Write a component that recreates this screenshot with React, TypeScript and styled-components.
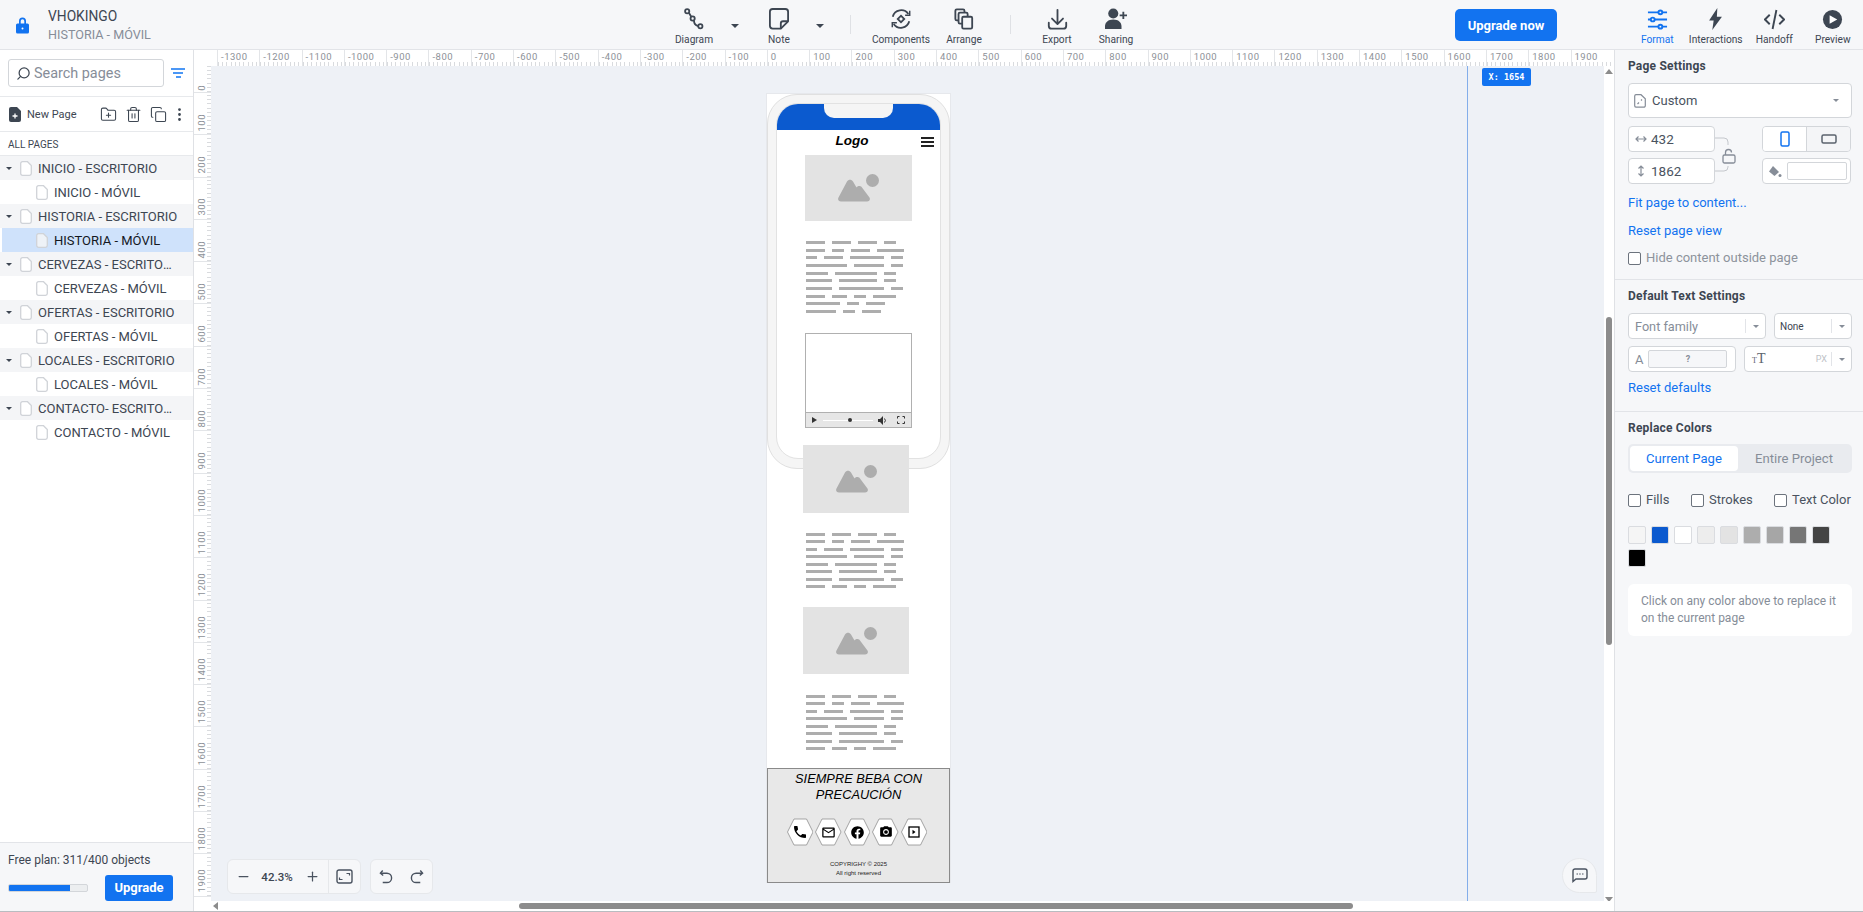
import React from "react";
import styled, { createGlobalStyle } from "styled-components";
import {
  Copy,
  FolderPlus,
  Minus,
  MoreVertical,
  Plus,
  Search,
  Trash2,
} from "lucide-react";
import { FaFacebook } from "react-icons/fa";
import { MdCameraAlt, MdMailOutline, MdPhone } from "react-icons/md";

const GlobalStyle = createGlobalStyle`
  html, body {
    margin: 0;
    padding: 0;
    height: 100%;
    overflow: hidden;
    background: #f6f7f9;
    font-family: Roboto, "Liberation Sans", Arial, sans-serif;
    color: #3d4652;
  }
  * { box-sizing: border-box; }
`;

const RULER_STEP = 42.3;

const Shell = styled.div`
  width: 1863px;
  height: 912px;
  display: flex;
  flex-direction: column;
  overflow: hidden;
`;

/* top bar */
const TopBar = styled.header`
  flex: 0 0 50px;
  display: flex;
  align-items: stretch;
  background: #f6f7f9;
  border-bottom: 1px solid #e2e4e8;
  overflow: hidden;
`;
const Brand = styled.div`
  flex: 0 0 664px;
  display: flex;
  align-items: center;
  padding-left: 15px;
  gap: 18px;
`;
const BrandText = styled.div`
  display: flex;
  flex-direction: column;
  gap: 5px;
  line-height: 14px;
  margin-top: 1px;
`;
const BrandName = styled.span`
  font-size: 13.8px;
  color: #3d4652;
`;
const BrandPage = styled.span`
  color: #868d98;
  font-size: 12.6px;
`;
const Tool = styled.button<{ $w: number; $ml?: number; $active?: boolean }>`
  flex: 0 0 ${(p) => p.$w}px;
  margin-left: ${(p) => p.$ml ?? 0}px;
  display: flex;
  flex-direction: column;
  align-items: center;
  padding: 6px 0 0;
  border: 0;
  background: none;
  font: inherit;
  font-size: 10.2px;
  line-height: 12px;
  white-space: nowrap;
  color: ${(p) => (p.$active ? "#1273f0" : "#3d4652")};
`;
const ToolIcon = styled.span`
  height: 26px;
  display: flex;
  align-items: center;
  justify-content: center;
  margin-bottom: 2px;
`;
const CaretCell = styled.div<{ $w: number }>`
  flex: 0 0 ${(p) => p.$w}px;
  display: flex;
  justify-content: center;
  padding-top: 24px;
`;
const Caret = styled.span<{ $size?: number; $color?: string }>`
  width: 0;
  height: 0;
  border-left: ${(p) => p.$size ?? 4}px solid transparent;
  border-right: ${(p) => p.$size ?? 4}px solid transparent;
  border-top: ${(p) => p.$size ?? 4}px solid ${(p) => p.$color ?? "#3d4652"};
`;
const ToolSep = styled.div<{ $ml: number }>`
  flex: 0 0 1px;
  margin: 15px 0 15px ${(p) => p.$ml}px;
  background: #dfe1e5;
`;
const UpgradeNow = styled.button`
  flex: 0 0 102px;
  height: 32px;
  margin: 9px 0 0 310px;
  border: 0;
  border-radius: 5px;
  background: #1273f0;
  color: #fff;
  font: inherit;
  font-size: 13px;
  font-weight: 700;
`;

/* left sidebar */
const Body = styled.div`
  flex: 1;
  display: flex;
  min-height: 0;
  border-bottom: 1px solid #b9bcc0;
`;
const Sidebar = styled.aside`
  flex: 0 0 194px;
  width: 194px;
  min-width: 0;
  display: flex;
  flex-direction: column;
  background: #fff;
  border-right: 1px solid #dfe1e5;
  overflow: hidden;
`;
const SearchRow = styled.div`
  flex: 0 0 47px;
  display: flex;
  align-items: flex-start;
  padding: 9px 0 0 8px;
  gap: 7px;
  border-bottom: 1px solid #e7e9ec;
`;
const SearchBox = styled.div`
  width: 156px;
  height: 28px;
  display: flex;
  align-items: center;
  gap: 3px;
  padding-left: 7px;
  border: 1px solid #d3d6da;
  border-radius: 3px;
  color: #868d98;
  font-size: 14.4px;
`;
const FilterLines = styled.span`
  display: flex;
  flex-direction: column;
  align-items: center;
  gap: 2px;
  margin-top: 9px;
`;
const FilterLine = styled.i<{ $w: number }>`
  display: block;
  width: ${(p) => p.$w}px;
  height: 2px;
  background: #4b97f5;
`;
const ActionRow = styled.div`
  flex: 0 0 35px;
  display: flex;
  align-items: center;
  padding-left: 9px;
  border-bottom: 1px solid #e7e9ec;
  color: #3d4652;
`;
const NewPageLabel = styled.span`
  font-size: 11px;
  margin: 0 23px 0 6px;
  width: 50px;
  white-space: nowrap;
`;
const ActionIcons = styled.div`
  display: flex;
  align-items: center;
  gap: 8px;
  & > :last-child {
    margin-left: -4px;
  }
`;
const AllPages = styled.div`
  flex: 0 0 24px;
  display: flex;
  align-items: center;
  padding: 2px 0 0 8px;
  font-size: 10px;
  color: #3d4652;
  border-bottom: 1px solid #e7e9ec;
`;
const PageList = styled.ul`
  flex: 1;
  list-style: none;
  margin: 0;
  padding: 0;
`;
const PageRow = styled.li<{ $parent?: boolean; $selected?: boolean }>`
  height: 24px;
  display: flex;
  align-items: center;
  margin-left: ${(p) => (p.$selected ? 2 : 0)}px;
  padding-left: ${(p) => (p.$parent ? 6 : p.$selected ? 34 : 36)}px;
  padding-top: 1px;
  font-size: 13px;
  color: ${(p) => (p.$selected ? "#14181f" : "#3d4652")};
  background: ${(p) =>
    p.$selected ? "#cfe2fb" : p.$parent ? "#f4f5f7" : "#fff"};
`;
const PageCaret = styled.span`
  flex: 0 0 14px;
  display: flex;
`;
const PageName = styled.span`
  flex: 0 1 141px;
  min-width: 0;
  margin-left: 6px;
  white-space: nowrap;
  overflow: hidden;
  text-overflow: ellipsis;
`;
const PlanBox = styled.div`
  flex: 0 0 69px;
  background: #f6f7f9;
  border-top: 1px solid #e2e4e8;
  padding: 9px 0 0 8px;
  font-size: 12px;
  line-height: 16px;
`;
const PlanRow = styled.div`
  display: flex;
  align-items: center;
  margin-top: 7px;
  gap: 17px;
`;
const PlanTrack = styled.div`
  width: 80px;
  height: 8px;
  border: 1px solid #d3d6da;
  border-radius: 2px;
  background: #eceef0;
  overflow: hidden;
`;
const PlanFill = styled.div`
  height: 100%;
  background: #1273f0;
`;
const PlanButton = styled.button`
  width: 68px;
  height: 26px;
  border: 0;
  border-radius: 3px;
  background: #1273f0;
  color: #fff;
  font: inherit;
  font-size: 13px;
  font-weight: 700;
`;

/* rulers and canvas */
const Stage = styled.main`
  flex: 1;
  min-width: 0;
  display: grid;
  grid-template-columns: 17px 1fr;
  grid-template-rows: 16px 1fr;
  background: #fff;
`;
const Corner = styled.div`
  background: #fff;
`;
const HRuler = styled.div`
  display: flex;
  padding-left: 6px;
  background: #fff;
  overflow: hidden;
`;
const HTick = styled.div`
  flex: 0 0 ${RULER_STEP}px;
  height: 16px;
  padding: 1px 0 0 3px;
  border-left: 1px solid #e3e5e8;
  font-size: 9.5px;
  line-height: 11px;
  letter-spacing: 0.5px;
  color: #8d9197;
  white-space: nowrap;
  background: repeating-linear-gradient(
      to right,
      #d9dbde 0,
      #d9dbde 1px,
      transparent 1px,
      transparent 4.23px
    )
    bottom left / 100% 4px no-repeat;
`;
const VRuler = styled.div`
  display: flex;
  flex-direction: column;
  background: #fff;
  overflow: hidden;
`;
const VTick = styled.div<{ $first?: boolean }>`
  flex: 0 0 ${(p) => (p.$first ? 27 : RULER_STEP)}px;
  width: 17px;
  position: relative;
  display: flex;
  align-items: flex-end;
  padding: 0 0 ${(p) => (p.$first ? 1 : 3)}px 3px;
  border-bottom: 1px solid #e3e5e8;
  background: repeating-linear-gradient(
      to top,
      #d9dbde 0,
      #d9dbde 1px,
      transparent 1px,
      transparent 4.23px
    )
    top right / 4px 100% no-repeat;
`;
const VLabel = styled.span`
  writing-mode: vertical-rl;
  transform: rotate(180deg);
  font-size: 9.5px;
  line-height: 10px;
  letter-spacing: 0.5px;
  color: #8d9197;
`;
const CanvasFrame = styled.div`
  display: grid;
  grid-template-columns: 1fr 10px;
  grid-template-rows: 1fr 10px;
  min-height: 0;
  min-width: 0;
`;
const Canvas = styled.div`
  position: relative;
  background: #eef1f6;
  overflow: hidden;
`;
const VBar = styled.div`
  display: flex;
  flex-direction: column;
  align-items: center;
  justify-content: space-between;
  padding: 3px 0 0;
  background: #fff;
  position: relative;
`;
const VThumb = styled.div`
  position: absolute;
  left: 2px;
  top: 251px;
  width: 6px;
  height: 328px;
  border-radius: 3px;
  background: #8c8c8c;
`;
const HBar = styled.div`
  position: relative;
  background: #fff;
`;
const HThumb = styled.div`
  position: absolute;
  left: 308px;
  top: 2px;
  width: 834px;
  height: 6px;
  border-radius: 3px;
  background: #8c8c8c;
`;
const ScrollArrow = styled.span<{ $dir: "up" | "down" | "left" }>`
  width: 0;
  height: 0;
  ${(p) =>
    p.$dir === "left"
      ? `position: absolute; left: 2px; top: 1px;
         border-top: 4px solid transparent; border-bottom: 4px solid transparent; border-right: 5px solid #8c8c8c;`
      : `border-left: 4px solid transparent; border-right: 4px solid transparent;
         ${p.$dir === "up" ? "border-bottom" : "border-top"}: 5px solid #8c8c8c;`}
`;
const ScrollFiller = styled.div`
  background: #fff;
  position: relative;
`;
const DownArrowWrap = styled.div`
  display: flex;
  margin-bottom: -1px;
`;
const GuideLine = styled.div`
  position: absolute;
  left: 1256px;
  top: 0;
  bottom: 0;
  width: 1px;
  background: #83aeea;
`;
const GuideTag = styled.div`
  position: absolute;
  left: 1271px;
  top: 2px;
  width: 49px;
  height: 18px;
  border-radius: 2px;
  background: #1273f0;
  color: #fff;
  font-family: "DejaVu Sans Mono", "Liberation Mono", monospace;
  font-size: 8.5px;
  font-weight: 700;
  line-height: 18px;
  text-align: center;
`;
const FloatGroup = styled.div<{ $x: number; $w: number }>`
  position: absolute;
  left: ${(p) => p.$x}px;
  bottom: 7px;
  width: ${(p) => p.$w}px;
  height: 35px;
  display: flex;
  align-items: center;
  justify-content: space-around;
  background: #f6f7f9;
  border: 1px solid #e6e8eb;
  border-radius: 6px;
  color: #4a5360;
`;
const ZoomGroup = styled(FloatGroup)`
  justify-content: flex-start;
  padding-left: 8px;
`;
const ZoomValue = styled.span`
  font-size: 11.5px;
  font-weight: 500;
  width: 38px;
  margin: 0 9px 0 7px;
  text-align: center;
  color: #3d4652;
`;
const ZoomSplit = styled.span`
  align-self: stretch;
  width: 32px;
  margin-left: auto;
  border-left: 1px solid #e6e8eb;
  display: flex;
  align-items: center;
  justify-content: center;
`;
const CommentBubble = styled.div`
  position: absolute;
  right: 7px;
  bottom: 8px;
  width: 35px;
  height: 35px;
  display: flex;
  align-items: center;
  justify-content: center;
  background: #f6f7f9;
  border: 1px solid #e6e8eb;
  border-radius: 50% 50% 2px 50%;
`;

/* wireframe on the canvas */
const WirePage = styled.div`
  position: absolute;
  left: 556px;
  top: 28px;
  width: 183px;
  height: 788px;
  background: #fff;
  box-shadow: 0 0 0 1px #e6e8ec;
`;
const Placed = styled.div<{ $x: number; $y: number; $w: number; $h: number }>`
  position: absolute;
  left: ${(p) => p.$x}px;
  top: ${(p) => p.$y}px;
  width: ${(p) => p.$w}px;
  height: ${(p) => p.$h}px;
`;
const PhoneShell = styled(Placed)`
  background: #f5f5f5;
  border: 1px solid #e0e0e0;
  border-radius: 30px;
`;
const PhoneScreen = styled(Placed)`
  background: #fff;
  border-radius: 22px;
  border: 1px solid #e2e2e2;
  overflow: hidden;
`;
const PhoneHead = styled.div`
  height: 26px;
  background: #0b5acf;
  display: flex;
  justify-content: center;
`;
const Notch = styled.div`
  width: 69px;
  height: 14px;
  margin-left: -1px;
  background: #f5f5f5;
  border-radius: 0 0 10px 10px;
`;
const LogoText = styled(Placed)`
  font-family: "Liberation Sans", Arial, sans-serif;
  font-size: 13.5px;
  font-weight: 700;
  font-style: italic;
  line-height: 16px;
  text-align: center;
  color: #000;
`;
const Burger = styled(Placed)`
  display: flex;
  flex-direction: column;
  justify-content: space-between;
`;
const BurgerLine = styled.i`
  display: block;
  height: 2px;
  background: #222;
`;
const ImageBox = styled(Placed)`
  background: #e3e3e3;
  display: flex;
  align-items: center;
  justify-content: center;
`;
const TextBlock = styled(Placed)`
  display: flex;
  flex-direction: column;
  justify-content: space-between;
`;
const TextRow = styled.div`
  display: flex;
  gap: 7px;
  height: 3px;
`;
const Word = styled.i`
  display: block;
  height: 3px;
  background: #adadad;
`;
const VideoBox = styled(Placed)`
  border: 1px solid #b0b0b0;
  display: flex;
  flex-direction: column;
  background: #fff;
`;
const VideoScreen = styled.div`
  flex: 1;
`;
const VideoBar = styled.div`
  flex: 0 0 15px;
  display: flex;
  align-items: center;
  gap: 5px;
  padding: 0 6px 0 6px;
  background: #e6e6e6;
  border-top: 1px solid #b0b0b0;
`;
const VideoPlay = styled.span`
  width: 0;
  height: 0;
  border-top: 3.5px solid transparent;
  border-bottom: 3.5px solid transparent;
  border-left: 5px solid #333;
`;
const VideoTrack = styled.span`
  flex: 1;
  height: 1px;
  margin-left: 1px;
  background: #fff;
  position: relative;
`;
const VideoKnob = styled.span`
  position: absolute;
  left: 25px;
  top: -2px;
  width: 4px;
  height: 4px;
  border-radius: 50%;
  background: #333;
`;
const FooterBox = styled(Placed)`
  background: #e8e8e8;
  border: 1px solid #8a8a8a;
  display: flex;
  flex-direction: column;
  align-items: center;
`;
const Slogan = styled.div`
  margin-top: 2px;
  width: 160px;
  text-align: center;
  font-family: "Liberation Sans", Arial, sans-serif;
  font-size: 12.8px;
  font-style: italic;
  line-height: 16px;
  color: #000;
`;
const SocialRow = styled.div`
  display: flex;
  gap: 2px;
  margin-top: 15px;
  margin-left: -3px;
`;
const Hex = styled.div`
  position: relative;
  width: 26.5px;
  height: 28px;
  display: flex;
  align-items: center;
  justify-content: center;
  color: #000;
`;
const HexShape = styled.svg`
  position: absolute;
  inset: 0;
`;
const HexGlyph = styled.span`
  position: relative;
  display: flex;
`;
const Copyright = styled.div`
  margin-top: 14px;
  text-align: center;
  font-family: "Liberation Sans", Arial, sans-serif;
  font-size: 6px;
  line-height: 8.5px;
  color: #222;
`;

/* right panel */
const Panel = styled.aside`
  flex: 0 0 249px;
  background: #f6f7f9;
  border-left: 1px solid #dfe1e5;
  display: flex;
  flex-direction: column;
`;
const PanelSection = styled.section<{ $h: number; $last?: boolean }>`
  flex: 0 0 ${(p) => p.$h}px;
  padding: 8px 11px 0 13px;
  border-bottom: ${(p) => (p.$last ? "0" : "1px solid #e2e4e8")};
`;
const SectionTitle = styled.h3`
  margin: 0;
  font-size: 12px;
  line-height: 16px;
  font-weight: 700;
  letter-spacing: 0.2px;
  color: #3d4652;
`;
const Field = styled.div<{ $w?: number; $h?: number }>`
  width: ${(p) => (p.$w ? `${p.$w}px` : "auto")};
  height: ${(p) => p.$h ?? 26}px;
  display: flex;
  align-items: center;
  background: #fff;
  border: 1px solid #d3d6da;
  border-radius: 4px;
  font-size: 13px;
  color: #4a5360;
`;
const CustomSelect = styled(Field)`
  margin-top: 9px;
  padding: 0 12px 0 5px;
  gap: 6px;
  justify-content: flex-start;
`;
const Grow = styled.span`
  flex: 1;
`;
const SizeGrid = styled.div`
  display: flex;
  margin-top: 8px;
`;
const SizeColumn = styled.div`
  display: flex;
  flex-direction: column;
  gap: 6px;
`;
const SizeField = styled(Field)`
  padding-left: 6px;
  gap: 4px;
  font-size: 13.5px;
`;
const LockBrace = styled.div`
  width: 47px;
  display: flex;
  align-items: flex-start;
  justify-content: flex-start;
`;
const Orient = styled.div`
  width: 89px;
  height: 26px;
  display: flex;
  border: 1px solid #d3d6da;
  border-radius: 4px;
  overflow: hidden;
`;
const OrientCell = styled.div<{ $on?: boolean }>`
  flex: 1;
  display: flex;
  align-items: center;
  justify-content: center;
  background: ${(p) => (p.$on ? "#fff" : "#f4f5f7")};
  & + & {
    border-left: 1px solid #d3d6da;
  }
`;
const FillField = styled(Field)`
  padding: 0 3px 0 5px;
  gap: 5px;
`;
const FillSwatch = styled.span`
  flex: 1;
  height: 18px;
  border: 1px solid #d3d6da;
  border-radius: 2px;
  background: #fff;
`;
const PanelLink = styled.a<{ $mt: number }>`
  display: block;
  margin-top: ${(p) => p.$mt}px;
  font-size: 13px;
  line-height: 16px;
  color: #1273f0;
`;
const CheckRow = styled.label<{ $mt?: number; $muted?: boolean }>`
  display: flex;
  align-items: center;
  gap: 5px;
  margin-top: ${(p) => p.$mt ?? 0}px;
  font-size: 13px;
  line-height: 16px;
  white-space: nowrap;
  color: ${(p) => (p.$muted ? "#8d939c" : "#4a5360")};
`;
const Box = styled.span`
  flex: 0 0 13px;
  height: 13px;
  background: #fff;
  border: 1px solid #6c737d;
  border-radius: 2px;
`;
const FontRow = styled.div`
  display: flex;
  justify-content: space-between;
  margin-top: 9px;
`;
const FontRow2 = styled(FontRow)`
  margin-top: 7px;
`;
const FieldText = styled.span<{ $muted?: boolean; $size?: number }>`
  flex: 1;
  padding-left: ${(p) => (p.$size ? 5 : 6)}px;
  font-size: ${(p) => p.$size ?? 12.7}px;
  color: ${(p) => (p.$muted ? "#868d98" : "#3d4652")};
`;
const FieldCaret = styled.span`
  flex: 0 0 20px;
  height: 14px;
  border-left: 1px solid #e2e4e8;
  display: flex;
  align-items: center;
  justify-content: center;
`;
const QuestionBox = styled.span`
  width: 79px;
  height: 18px;
  margin-left: 5px;
  background: #f6f7f9;
  border: 1px solid #d3d6da;
  border-radius: 2px;
  display: flex;
  align-items: center;
  justify-content: center;
  font-size: 9px;
  font-weight: 700;
  color: #868d98;
`;
const GlyphA = styled.span`
  margin-left: 6px;
  font-size: 13px;
  color: #868d98;
`;
const GlyphT = styled.span`
  margin-left: 7px;
  font-family: "Liberation Serif", serif;
  font-size: 14px;
  color: #5b636e;
`;
const GlyphSmallT = styled.span`
  font-size: 8px;
`;
const PxUnit = styled.span`
  margin-left: auto;
  margin-right: 4px;
  font-size: 9px;
  color: #bdc1c6;
`;
const Tabs = styled.div`
  margin-top: 8px;
  height: 29px;
  display: flex;
  padding: 2px;
  background: #e9ebef;
  border-radius: 5px;
`;
const TabItem = styled.div<{ $on?: boolean }>`
  width: ${(p) => (p.$on ? 108 : 112)}px;
  display: flex;
  align-items: center;
  justify-content: center;
  border-radius: 4px;
  font-size: 13.1px;
  background: ${(p) => (p.$on ? "#fff" : "transparent")};
  color: ${(p) => (p.$on ? "#1273f0" : "#868d98")};
`;
const ChecksRow = styled.div`
  display: flex;
  margin-top: 19px;
`;
const CheckCell = styled.div<{ $w: number }>`
  flex: 0 0 ${(p) => p.$w}px;
`;
const SwatchWrap = styled.div`
  display: flex;
  flex-wrap: wrap;
  gap: 5px;
  margin-top: 18px;
`;
const Swatch = styled.span<{ $c: string }>`
  width: 18px;
  height: 18px;
  border-radius: 2px;
  border: 1px solid #dadce0;
  background: ${(p) => p.$c};
`;
const InfoBox = styled.div`
  margin-top: 17px;
  height: 52px;
  padding: 9px 12px 9px 13px;
  background: #fff;
  border-radius: 6px;
  font-size: 12px;
  line-height: 17px;
  color: #868d98;
`;

const PageIcon = ({ selected }: { selected?: boolean }) => (
  <svg width="12" height="15" viewBox="0 0 12 15" fill={selected ? "#eef2f7" : "#fff"} stroke="#d0d3d8" strokeWidth="1.3" style={{ flexShrink: 0 }}>
    <path d="M2.5.7h5l3.8 3.8v8a1.8 1.8 0 0 1-1.8 1.8h-7A1.8 1.8 0 0 1 .7 12.5v-10A1.8 1.8 0 0 1 2.5.7z" />
  </svg>
);

const pages: [string, boolean, boolean?][] = [
  ["INICIO - ESCRITORIO", true],
  ["INICIO - MÓVIL", false],
  ["HISTORIA - ESCRITORIO", true],
  ["HISTORIA - MÓVIL", false, true],
  ["CERVEZAS - ESCRITORIO", true],
  ["CERVEZAS - MÓVIL", false],
  ["OFERTAS - ESCRITORIO", true],
  ["OFERTAS - MÓVIL", false],
  ["LOCALES - ESCRITORIO", true],
  ["LOCALES - MÓVIL", false],
  ["CONTACTO- ESCRITORIO", true],
  ["CONTACTO - MÓVIL", false],
];

const textLines = [
  [19, 19, 19, 12],
  [19, 12, 19, 27],
  [11, 19, 34, 12],
  [41, 30, 12],
  [22, 42, 12],
  [26, 38, 12],
  [26, 45, 12],
  [19, 15, 12, 23],
  [34, 12, 19],
  [30, 12, 19],
];

const swatches = [
  "#f5f5f5", "#0b5acf", "#ffffff", "#ededed", "#e3e3e3",
  "#adadad", "#a6a6a6", "#767676", "#444444", "#000000",
];

const hTicks = Array.from({ length: 33 }, (_, i) => (i - 13) * 100);
const vTicks = Array.from({ length: 20 }, (_, i) => i * 100);

function MountainIcon() {
  return (
    <svg width="41" height="28" viewBox="0 0 41 28" fill="#adadad">
      <circle cx="34.5" cy="6.5" r="6.5" />
      <path d="M3 27.5c-2.5 0-3.5-2-2.5-4L9 7.5c1.5-2.5 4.5-2.5 6 0l3.5 6c1-2 4.5-2 5.5 0l7.5 10c1 2 0 4-2.5 4z" />
    </svg>
  );
}

function Words({ rows }: { rows: number }) {
  return (
    <>
      {textLines.slice(0, rows).map((line, i) => (
        <TextRow key={i}>
          {line.map((w, j) => (
            <Word key={j} style={{ width: w }} />
          ))}
        </TextRow>
      ))}
    </>
  );
}

function HexIcon({ children }: { children: React.ReactNode }) {
  return (
    <Hex>
      <HexShape width="26.5" height="28" viewBox="0 0 26.5 28">
        <polygon points="7,1 19.5,1 26,14 19.5,27 7,27 0.5,14" fill="#fff" stroke="#8f8f8f" strokeWidth="0.8" />
      </HexShape>
      <HexGlyph>{children}</HexGlyph>
    </Hex>
  );
}

export default function App() {
  return (
    <Shell>
      <GlobalStyle />
      <TopBar>
        <Brand>
          <svg width="15" height="18" viewBox="0 0 15 18" fill="#1273f0">
            <path d="M4 8V5a3.5 3.5 0 0 1 7 0v3H9.3V5a1.8 1.8 0 0 0-3.6 0v3z" />
            <rect x="1" y="7.5" width="13" height="10" rx="1.5" />
            <circle cx="7.5" cy="12.5" r="1" fill="#fff" />
          </svg>
          <BrandText>
            <BrandName>VHOKINGO</BrandName>
            <BrandPage>HISTORIA - MÓVIL</BrandPage>
          </BrandText>
        </Brand>
        <Tool $w={60}>
          <ToolIcon>
            <svg width="20" height="22" viewBox="0 0 22 24" fill="none" stroke="#3d4652" strokeWidth="2">
              <circle cx="3.5" cy="3.5" r="2.3" />
              <circle cx="18" cy="20" r="2.3" />
              <circle cx="9.5" cy="11.5" r="2.3" />
              <path d="M5.5 5.5l2.5 4M11 14c0 3 1.5 5 4.5 5.7" />
            </svg>
          </ToolIcon>
          Diagram
        </Tool>
        <CaretCell $w={22}><Caret /></CaretCell>
        <Tool $w={66}>
          <ToolIcon>
            <svg width="20" height="22" viewBox="0 0 22 24" fill="none" stroke="#3d4652" strokeWidth="2" strokeLinejoin="round">
              <path d="M13 22.5H4a3 3 0 0 1-3-3V4a3 3 0 0 1 3-3h14a3 3 0 0 1 3 3v10.5z" />
              <path d="M13 22.5V17a2.5 2.5 0 0 1 2.5-2.5H21" />
            </svg>
          </ToolIcon>
          Note
        </Tool>
        <CaretCell $w={16}><Caret /></CaretCell>
        <ToolSep $ml={22} />
        <Tool $w={60} $ml={20}>
          <ToolIcon>
            <svg width="22" height="22" viewBox="0 0 24 24" fill="none" stroke="#3d4652" strokeWidth="2">
              <path d="M3 9.5A9.5 9.5 0 0 1 20 6.5M21 14.5A9.5 9.5 0 0 1 4 17.5" />
              <path d="M21.5 3v5h-5M2.5 21v-5h5" strokeWidth="1.6" />
              <rect x="9.5" y="9.5" width="5" height="5" transform="rotate(45 12 12)" />
            </svg>
          </ToolIcon>
          Components
        </Tool>
        <Tool $w={66}>
          <ToolIcon>
            <svg width="20" height="22" viewBox="0 0 22 24" fill="none" stroke="#3d4652" strokeWidth="2" strokeLinejoin="round">
              <rect x="1.5" y="1.5" width="10" height="12" rx="1.5" />
              <rect x="5" y="5" width="10" height="12" rx="1.5" fill="#f6f7f9" />
              <rect x="9" y="9.5" width="11" height="13" rx="1.5" fill="#f6f7f9" />
            </svg>
          </ToolIcon>
          Arrange
        </Tool>
        <ToolSep $ml={13} />
        <Tool $w={60} $ml={16}>
          <ToolIcon>
            <svg width="21" height="22" viewBox="0 0 22 24" fill="none" stroke="#3d4652" strokeWidth="2" strokeLinecap="round" strokeLinejoin="round">
              <path d="M11 2v15M5 11.5l6 6 6-6" />
              <path d="M1.5 16v3.5a3 3 0 0 0 3 3h13a3 3 0 0 0 3-3V16" />
            </svg>
          </ToolIcon>
          Export
        </Tool>
        <Tool $w={58}>
          <ToolIcon>
            <svg width="22" height="22" viewBox="0 0 24 24" fill="#3d4652">
              <circle cx="9" cy="6" r="5.5" />
              <path d="M0 23v-3c0-4.5 3.5-7.5 9-7.5s9 3 9 7.5v3z" />
              <path d="M19 4h2v3h3v2h-3v3h-2V9h-3V7h3z" />
            </svg>
          </ToolIcon>
          Sharing
        </Tool>
        <UpgradeNow>Upgrade now</UpgradeNow>
        <Tool $w={58.5} $ml={71} $active>
          <ToolIcon>
            <svg width="21" height="21" viewBox="0 0 22 22" fill="#f6f7f9" stroke="#1273f0" strokeWidth="2">
              <path d="M1 3.5h20M1 11h20M1 18.5h20" />
              <circle cx="14" cy="3.5" r="2" />
              <circle cx="6" cy="11" r="2" />
              <circle cx="14" cy="18.5" r="2" />
            </svg>
          </ToolIcon>
          Format
        </Tool>
        <Tool $w={58.5}>
          <ToolIcon>
            <svg width="15" height="22" viewBox="0 0 16 24" fill="#3d4652">
              <path d="M10 0L1 13.5h5L4.5 24 15 9.5H9.5z" />
            </svg>
          </ToolIcon>
          Interactions
        </Tool>
        <Tool $w={58.5}>
          <ToolIcon>
            <svg width="21" height="21" viewBox="0 0 22 22" fill="none" stroke="#3d4652" strokeWidth="2">
              <path d="M6 6l-5 5 5 5M16 6l5 5-5 5M13 1L9 21" />
            </svg>
          </ToolIcon>
          Handoff
        </Tool>
        <Tool $w={58.5}>
          <ToolIcon>
            <svg width="21" height="21" viewBox="0 0 22 22">
              <circle cx="11" cy="11" r="10" fill="#3d4652" />
              <path d="M8 6.5l8 4.5-8 4.5z" fill="#fff" />
            </svg>
          </ToolIcon>
          Preview
        </Tool>
      </TopBar>

      <Body>
        <Sidebar>
          <SearchRow>
            <SearchBox>
              <Search size={15} color="#3d4652" style={{ transform: "scaleX(-1)" }} />
              Search pages
            </SearchBox>
            <FilterLines>
              <FilterLine $w={14} />
              <FilterLine $w={10} />
              <FilterLine $w={5} />
            </FilterLines>
          </SearchRow>
          <ActionRow>
            <svg width="12" height="15" viewBox="0 0 12 15">
              <path d="M2 0h6l4 4v9a2 2 0 0 1-2 2H2a2 2 0 0 1-2-2V2a2 2 0 0 1 2-2z" fill="#3d4652" />
              <path d="M6 6.5v5M3.5 9h5" stroke="#fff" strokeWidth="1.3" />
            </svg>
            <NewPageLabel>New Page</NewPageLabel>
            <ActionIcons>
              <FolderPlus size={17} strokeWidth={1.5} />
              <Trash2 size={17} strokeWidth={1.5} />
              <Copy size={17} strokeWidth={1.5} />
              <MoreVertical size={17} strokeWidth={2} />
            </ActionIcons>
          </ActionRow>
          <AllPages>ALL PAGES</AllPages>
          <PageList>
            {pages.map(([name, parent, selected]) => (
              <PageRow key={name} $parent={parent} $selected={selected}>
                {parent && (
                  <PageCaret>
                    <Caret $size={3} />
                  </PageCaret>
                )}
                <PageIcon selected={selected} />
                <PageName>{name}</PageName>
              </PageRow>
            ))}
          </PageList>
          <PlanBox>
            Free plan: 311/400 objects
            <PlanRow>
              <PlanTrack>
                <PlanFill style={{ width: `${(311 / 400) * 100}%` }} />
              </PlanTrack>
              <PlanButton>Upgrade</PlanButton>
            </PlanRow>
          </PlanBox>
        </Sidebar>

        <Stage>
          <Corner />
          <HRuler>
            {hTicks.map((t) => (
              <HTick key={t}>{t}</HTick>
            ))}
          </HRuler>
          <VRuler>
            {vTicks.map((t, i) => (
              <VTick key={t} $first={i === 0}>
                <VLabel>{t}</VLabel>
              </VTick>
            ))}
          </VRuler>
          <CanvasFrame>
            <Canvas>
              <WirePage>
                <PhoneShell $x={0} $y={0} $w={183} $h={375} />
                <PhoneScreen $x={9} $y={9} $w={165} $h={356}>
                  <PhoneHead>
                    <Notch />
                  </PhoneHead>
                </PhoneScreen>
                <LogoText $x={35} $y={39} $w={100} $h={16}>Logo</LogoText>
                <Burger $x={154} $y={43} $w={13} $h={10}>
                  <BurgerLine />
                  <BurgerLine />
                  <BurgerLine />
                </Burger>
                <ImageBox $x={38} $y={61} $w={107} $h={66}>
                  <MountainIcon />
                </ImageBox>
                <TextBlock $x={39} $y={147} $w={100} $h={72}>
                  <Words rows={10} />
                </TextBlock>
                <VideoBox $x={38} $y={239} $w={107} $h={95}>
                  <VideoScreen />
                  <VideoBar>
                    <VideoPlay />
                    <VideoTrack>
                      <VideoKnob />
                    </VideoTrack>
                    <svg width="9" height="9" viewBox="0 0 9 9" fill="#333">
                      <path d="M0 3h2l3-3v9L2 6H0z" />
                      <path d="M6.5 2.5a3 3 0 0 1 0 4" stroke="#333" fill="none" />
                    </svg>
                    <svg width="8" height="8" viewBox="0 0 8 8" fill="none" stroke="#333" style={{ marginLeft: 5 }}>
                      <path d="M.5 2.5v-2h2M5.5.5h2v2M7.5 5.5v2h-2M2.5 7.5h-2v-2" />
                    </svg>
                  </VideoBar>
                </VideoBox>
                <ImageBox $x={36} $y={351} $w={106} $h={68}>
                  <MountainIcon />
                </ImageBox>
                <TextBlock $x={39} $y={439} $w={100} $h={55}>
                  <Words rows={8} />
                </TextBlock>
                <ImageBox $x={36} $y={513} $w={106} $h={67}>
                  <MountainIcon />
                </ImageBox>
                <TextBlock $x={39} $y={601} $w={100} $h={55}>
                  <Words rows={8} />
                </TextBlock>
                <FooterBox $x={0} $y={674} $w={183} $h={115}>
                  <Slogan>SIEMPRE BEBA CON PRECAUCIÓN</Slogan>
                  <SocialRow>
                    <HexIcon><MdPhone size={16} /></HexIcon>
                    <HexIcon><MdMailOutline size={15} /></HexIcon>
                    <HexIcon><FaFacebook size={13} /></HexIcon>
                    <HexIcon><MdCameraAlt size={14} /></HexIcon>
                    <HexIcon>
                      <svg width="12" height="12" viewBox="0 0 12 12">
                        <rect x="1" y="1" width="10" height="10" fill="none" stroke="#000" strokeWidth="1.3" />
                        <path d="M4.5 3.7L7.5 6l-3 2.3z" fill="#000" />
                      </svg>
                    </HexIcon>
                  </SocialRow>
                  <Copyright>
                    COPYRIGHY © 2025
                    <br />
                    All right reserved
                  </Copyright>
                </FooterBox>
              </WirePage>

              <GuideLine />
              <GuideTag>X: 1654</GuideTag>

              <ZoomGroup $x={16} $w={134}>
                <Minus size={15} />
                <ZoomValue>42.3%</ZoomValue>
                <Plus size={15} />
                <ZoomSplit>
                  <svg width="17" height="15" viewBox="0 0 17 15" fill="none" stroke="#4a5360" strokeWidth="1.4">
                    <rect x="1" y="1" width="15" height="13" rx="2" />
                    <path d="M10.5 4.5h3v2M6.5 10.5h-3v-2" strokeWidth="1.2" />
                  </svg>
                </ZoomSplit>
              </ZoomGroup>
              <FloatGroup $x={159} $w={63}>
                <svg width="14" height="15" viewBox="0 0 15 15" fill="none" stroke="#4a5360" strokeWidth="1.5">
                  <path d="M4 1L1.5 4 4.5 6.5" />
                  <path d="M2 4h6.5a5 5 0 0 1 0 10H4" />
                </svg>
                <svg width="14" height="15" viewBox="0 0 15 15" fill="none" stroke="#4a5360" strokeWidth="1.5">
                  <path d="M11 1l2.5 3-3 2.5" />
                  <path d="M13 4H6.5a5 5 0 0 0 0 10H11" />
                </svg>
              </FloatGroup>
              <CommentBubble>
                <svg width="16" height="15" viewBox="0 0 16 15" fill="none" stroke="#4a5360" strokeWidth="1.4">
                  <path d="M1 13.5V3a2 2 0 0 1 2-2h10a2 2 0 0 1 2 2v6a2 2 0 0 1-2 2H4z" />
                  <path d="M4.5 6H6M7.2 6h1.5M10 6h1.5" strokeWidth="1" />
                </svg>
              </CommentBubble>
            </Canvas>
            <VBar>
              <ScrollArrow $dir="up" />
              <VThumb />
              <DownArrowWrap>
                <ScrollArrow $dir="down" />
              </DownArrowWrap>
            </VBar>
            <HBar>
              <ScrollArrow $dir="left" />
              <HThumb />
            </HBar>
            <ScrollFiller />
          </CanvasFrame>
        </Stage>

        <Panel>
          <PanelSection $h={230}>
            <SectionTitle>Page Settings</SectionTitle>
            <CustomSelect $h={35}>
              <svg width="12" height="14" viewBox="0 0 12 14" fill="none" stroke="#868d98" strokeWidth="1.2">
                <path d="M2 .7h5l4.3 4v7a1.5 1.5 0 0 1-1.5 1.5H2A1.5 1.5 0 0 1 .7 11.7V2A1.5 1.5 0 0 1 2 .7z" />
                <path d="M3.5 10L5 8.5M7 6.5l1-1" />
              </svg>
              Custom
              <Grow />
              <Caret $size={3.5} $color="#868d98" />
            </CustomSelect>
            <SizeGrid>
              <SizeColumn>
                <SizeField $w={87}>
                  <svg width="12" height="8" viewBox="0 0 12 8" fill="none" stroke="#868d98" strokeWidth="1.2">
                    <path d="M1 4h10M3.5 1.5L1 4l2.5 2.5M8.5 1.5L11 4 8.5 6.5" />
                  </svg>
                  432
                </SizeField>
                <SizeField $w={87}>
                  <svg width="12" height="12" viewBox="0 0 12 12" fill="none" stroke="#868d98" strokeWidth="1.2">
                    <path d="M6 1v10M3.5 3.5L6 1l2.5 2.5M3.5 8.5L6 11l2.5-2.5" />
                  </svg>
                  1862
                </SizeField>
              </SizeColumn>
              <LockBrace>
                <svg width="22" height="58" viewBox="0 0 22 58" fill="none" stroke="#c4c7cc" strokeWidth="1">
                  <path d="M0 12h9a4 4 0 0 1 4 4v3M0 45h9a4 4 0 0 0 4-4v-1" />
                  <rect x="8" y="29" width="12" height="8" rx="1.5" stroke="#868d98" strokeWidth="1.3" />
                  <path d="M10.5 29v-2.5a3 3 0 0 1 6 0" stroke="#868d98" strokeWidth="1.3" />
                </svg>
              </LockBrace>
              <SizeColumn>
                <Orient>
                  <OrientCell $on>
                    <svg width="10" height="16" viewBox="0 0 10 16" fill="none" stroke="#1273f0" strokeWidth="1.5">
                      <rect x="1" y="1" width="8" height="14" rx="1.5" />
                    </svg>
                  </OrientCell>
                  <OrientCell>
                    <svg width="16" height="10" viewBox="0 0 16 10" fill="none" stroke="#5b636e" strokeWidth="1.5">
                      <rect x="1" y="1" width="14" height="8" rx="1.5" />
                    </svg>
                  </OrientCell>
                </Orient>
                <FillField $w={89}>
                  <svg width="14" height="13" viewBox="0 0 14 13" fill="#868d98">
                    <path d="M5 1l6 6-4.5 4L1 6.5z" />
                    <circle cx="12" cy="10.5" r="1.5" />
                  </svg>
                  <FillSwatch />
                </FillField>
              </SizeColumn>
            </SizeGrid>
            <PanelLink $mt={11}>Fit page to content...</PanelLink>
            <PanelLink $mt={12}>Reset page view</PanelLink>
            <CheckRow $mt={11} $muted>
              <Box />
              Hide content outside page
            </CheckRow>
          </PanelSection>
          <PanelSection $h={132}>
            <SectionTitle>Default Text Settings</SectionTitle>
            <FontRow>
              <Field $w={138}>
                <FieldText $muted>Font family</FieldText>
                <FieldCaret><Caret $size={3.5} $color="#868d98" /></FieldCaret>
              </Field>
              <Field $w={78}>
                <FieldText $size={10}>None</FieldText>
                <FieldCaret><Caret $size={3.5} $color="#868d98" /></FieldCaret>
              </Field>
            </FontRow>
            <FontRow2>
              <Field $w={108}>
                <GlyphA>A</GlyphA>
                <QuestionBox>?</QuestionBox>
              </Field>
              <Field $w={108}>
                <GlyphT><GlyphSmallT>T</GlyphSmallT>T</GlyphT>
                <PxUnit>PX</PxUnit>
                <FieldCaret><Caret $size={3.5} $color="#868d98" /></FieldCaret>
              </Field>
            </FontRow2>
            <PanelLink $mt={8}>Reset defaults</PanelLink>
          </PanelSection>
          <PanelSection $h={299} $last>
            <SectionTitle>Replace Colors</SectionTitle>
            <Tabs>
              <TabItem $on>Current Page</TabItem>
              <TabItem>Entire Project</TabItem>
            </Tabs>
            <ChecksRow>
              <CheckCell $w={63}>
                <CheckRow><Box />Fills</CheckRow>
              </CheckCell>
              <CheckCell $w={83}>
                <CheckRow><Box />Strokes</CheckRow>
              </CheckCell>
              <CheckCell $w={78}>
                <CheckRow><Box />Text Color</CheckRow>
              </CheckCell>
            </ChecksRow>
            <SwatchWrap>
              {swatches.map((c) => (
                <Swatch key={c} $c={c} />
              ))}
            </SwatchWrap>
            <InfoBox>Click on any color above to replace it on the current page</InfoBox>
          </PanelSection>
        </Panel>
      </Body>
    </Shell>
  );
}
